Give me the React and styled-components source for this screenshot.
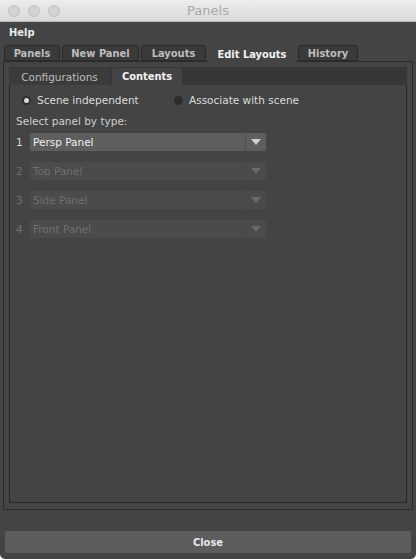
import React from "react";
import styled, { createGlobalStyle } from "styled-components";

const Global = createGlobalStyle`
  html, body { margin: 0; padding: 0; background: #ffffff; }
  body { font-family: "DejaVu Sans", "Liberation Sans", sans-serif; }
  * { box-sizing: border-box; }
`;

const boldFont = `"DejaVu Sans Condensed", "DejaVu Sans", sans-serif`;

const Window = styled.div`
  width: 416px;
  height: 559px;
  background: #444444;
  border-radius: 0 0 5px 5px;
  overflow: hidden;
  display: flex;
  flex-direction: column;
  font-size: 10.5px;
`;

const TitleBar = styled.div`
  height: 22px;
  flex: none;
  background: linear-gradient(#ededed, #d9d9d9);
  border-bottom: 1px solid #b9b9b9;
  display: flex;
  align-items: center;
  position: relative;
  padding-left: 8px;
  gap: 8px;
`;

const Light = styled.span`
  width: 12px;
  height: 12px;
  border-radius: 50%;
  background: #d2d2d2;
  border: 1px solid #c2c2c2;
`;

const Title = styled.div`
  position: absolute;
  left: 0;
  right: 0;
  text-align: center;
  font-size: 13px;
  color: #a8a8a8;
  pointer-events: none;
`;

const MenuBar = styled.div`
  height: 21px;
  flex: none;
  display: flex;
  align-items: center;
  padding-left: 9px;
  color: #eaeaea;
  font-family: ${boldFont};
  font-weight: bold;
  font-size: 11px;
`;

const TabStrip = styled.div`
  display: flex;
  align-items: flex-end;
  padding: 2px 0 0 4px;
  gap: 2px;
  height: 18px;
  flex: none;
  position: relative;
  z-index: 1;
`;

const Tab = styled.div`
  width: ${(p) => p.$w}px;
  height: ${(p) => (p.$active ? "17px" : "16px")};
  display: flex;
  align-items: center;
  justify-content: center;
  background: ${(p) => (p.$active ? "#444444" : "#3a3a3a")};
  border: 1px solid ${(p) => (p.$active ? "#444444" : "#2c2c2c")};
  border-bottom: ${(p) => (p.$active ? "none" : "1px solid #2c2c2c")};
  border-radius: 3px 3px 0 0;
  color: ${(p) => (p.$active ? "#f2f2f2" : "#bdbdbd")};
  font-family: ${boldFont};
  font-weight: bold;
  font-size: 11px;
  white-space: nowrap;
  margin-bottom: ${(p) => (p.$active ? "-1px" : "0")};
`;

const TabPanel = styled.div`
  flex: none;
  height: 449px;
  margin: 0 3px;
  border: 1px solid #2a2a2a;
  padding: 5px 5px 6px 5px;
  display: flex;
`;

const Inner = styled.div`
  flex: 1;
  border-left: 1px solid #2a2a2a;
  border-right: 1px solid #2a2a2a;
  border-bottom: 1px solid #2a2a2a;
  display: flex;
  flex-direction: column;
`;

const SubTabStrip = styled.div`
  height: 18px;
  background: #373737;
  display: flex;
  align-items: flex-end;
  gap: 2px;
  margin-left: -1px;
  margin-right: -1px;
`;

const SubTab = styled.div`
  width: ${(p) => p.$w}px;
  height: 17px;
  display: flex;
  align-items: center;
  justify-content: center;
  background: ${(p) => (p.$active ? "#444444" : "#3b3b3b")};
  color: ${(p) => (p.$active ? "#f2f2f2" : "#bdbdbd")};
  font-family: ${(p) => (p.$active ? boldFont : "inherit")};
  font-weight: ${(p) => (p.$active ? "bold" : "normal")};
  font-size: ${(p) => (p.$active ? "11px" : "10.5px")};
  border-radius: 3px 3px 0 0;
  white-space: nowrap;
`;

const Content = styled.div`
  padding: 8px 0 0 6px;
  display: flex;
  flex-direction: column;
`;

const RadioRow = styled.div`
  display: flex;
  align-items: center;
  height: 14px;
  padding-left: 6px;
`;

const RadioItem = styled.label`
  display: flex;
  align-items: center;
  gap: 6px;
  color: #dcdcdc;
  width: ${(p) => (p.$w ? `${p.$w}px` : "auto")};
`;

const RadioDot = styled.span`
  width: 9px;
  height: 9px;
  border-radius: 50%;
  background: ${(p) => (p.$on ? "#d6d6d6" : "#2b2b2b")};
  border: ${(p) => (p.$on ? "2px solid #2e2e2e" : "1px solid #2b2b2b")};
  flex: none;
`;

const Label = styled.div`
  color: #cfcfcf;
  margin-top: 7px;
  height: 14px;
  display: flex;
  align-items: center;
`;

const Rows = styled.div`
  display: flex;
  flex-direction: column;
  gap: 11px;
  margin-top: 5px;
`;

const Row = styled.div`
  display: flex;
  align-items: center;
  height: 18px;
`;

const Num = styled.div`
  width: 14px;
  color: ${(p) => (p.$disabled ? "#707070" : "#dcdcdc")};
`;

const Select = styled.div`
  width: 236px;
  height: 18px;
  display: flex;
  border-radius: 2px;
  overflow: hidden;
  background: ${(p) => (p.$disabled ? "#4b4b4b" : "#5e5e5e")};
`;

const SelectText = styled.div`
  flex: 1;
  display: flex;
  align-items: center;
  padding-left: 3px;
  color: ${(p) => (p.$disabled ? "#6f6f6f" : "#f0f0f0")};
  border-right: 1px solid ${(p) => (p.$disabled ? "#454545" : "#4f4f4f")};
`;

const Arrow = styled.div`
  width: 20px;
  display: flex;
  align-items: center;
  justify-content: center;
`;

const Footer = styled.div`
  flex: 1;
  display: flex;
  align-items: flex-end;
  padding: 0 5px 6px 5px;
`;

const CloseButton = styled.button`
  width: 100%;
  height: 22px;
  border: none;
  border-radius: 2px;
  background: #5d5d5d;
  color: #e8e8e8;
  font-family: ${boldFont};
  font-size: 11px;
  font-weight: bold;
  padding: 0;
`;

const tabs = [
  { label: "Panels", w: 56 },
  { label: "New Panel", w: 77 },
  { label: "Layouts", w: 65 },
  { label: "Edit Layouts", w: 88, active: true },
  { label: "History", w: 60 },
];

const rows = [
  { n: 1, label: "Persp Panel" },
  { n: 2, label: "Top Panel", disabled: true },
  { n: 3, label: "Side Panel", disabled: true },
  { n: 4, label: "Front Panel", disabled: true },
];

function Tri({ color }) {
  return (
    <svg width="10" height="6" viewBox="0 0 10 6">
      <path d="M0 0 H10 L5 6 Z" fill={color} />
    </svg>
  );
}

export default function App() {
  return (
    <>
      <Global />
      <Window>
        <TitleBar>
          <Light />
          <Light />
          <Light />
          <Title>Panels</Title>
        </TitleBar>
        <MenuBar>Help</MenuBar>
        <TabStrip>
          {tabs.map((t) => (
            <Tab key={t.label} $active={t.active} $w={t.w}>
              {t.label}
            </Tab>
          ))}
        </TabStrip>
        <TabPanel>
          <Inner>
            <SubTabStrip>
              <SubTab $w={101}>Configurations</SubTab>
              <SubTab $active $w={70}>Contents</SubTab>
            </SubTabStrip>
            <Content>
              <RadioRow>
                <RadioItem $w={152}>
                  <RadioDot $on />
                  Scene independent
                </RadioItem>
                <RadioItem>
                  <RadioDot />
                  Associate with scene
                </RadioItem>
              </RadioRow>
              <Label>Select panel by type:</Label>
              <Rows>
                {rows.map((r) => (
                  <Row key={r.n}>
                    <Num $disabled={r.disabled}>{r.n}</Num>
                    <Select $disabled={r.disabled}>
                      <SelectText $disabled={r.disabled}>{r.label}</SelectText>
                      <Arrow>
                        <Tri color={r.disabled ? "#6a6a6a" : "#cfcfcf"} />
                      </Arrow>
                    </Select>
                  </Row>
                ))}
              </Rows>
            </Content>
          </Inner>
        </TabPanel>
        <Footer>
          <CloseButton>Close</CloseButton>
        </Footer>
      </Window>
    </>
  );
}
